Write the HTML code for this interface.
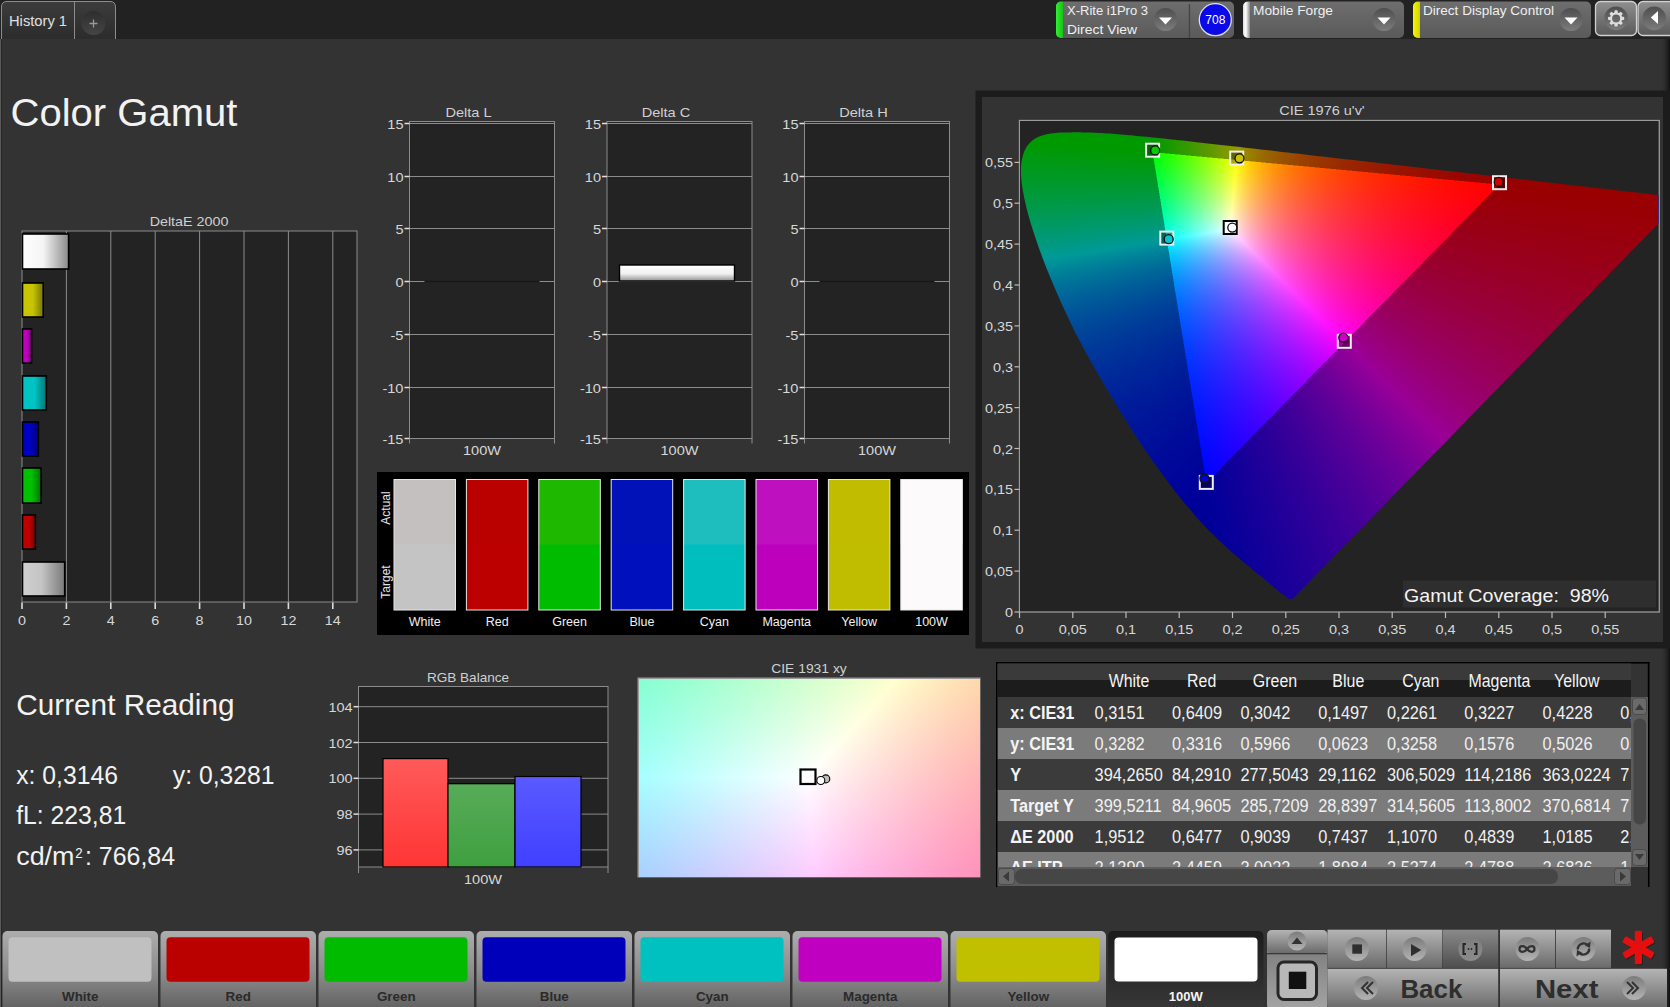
<!DOCTYPE html><html><head><meta charset="utf-8"><style>
html,body{margin:0;padding:0;width:1670px;height:1007px;overflow:hidden;background:#333;}
svg{position:absolute;left:0;top:0;font-family:"Liberation Sans", sans-serif;}
canvas{position:absolute;}
</style></head><body>
<svg width="1670" height="1007" viewBox="0 0 1670 1007">
<defs>
<linearGradient id="gTab" x1="0" y1="0" x2="0" y2="1"><stop offset="0" stop-color="#3c3c3c"/><stop offset="1" stop-color="#2c2c2c"/></linearGradient>
<linearGradient id="gPanel" x1="0" y1="0" x2="0" y2="1"><stop offset="0" stop-color="#6e6e6e"/><stop offset="1" stop-color="#5a5a5a"/></linearGradient>
<linearGradient id="gDrop" x1="0" y1="0" x2="0" y2="1"><stop offset="0" stop-color="#4e4e4e"/><stop offset="1" stop-color="#7c7c7c"/></linearGradient><linearGradient id="gSq" x1="0" y1="0" x2="0" y2="1"><stop offset="0" stop-color="#8e8e8e"/><stop offset="1" stop-color="#5a5a5a"/></linearGradient>
<linearGradient id="gBtn" x1="0" y1="0" x2="0" y2="1"><stop offset="0" stop-color="#adadad"/><stop offset="0.55" stop-color="#8a8a8a"/><stop offset="1" stop-color="#5e5e5e"/></linearGradient>
<linearGradient id="gCtl" x1="0" y1="0" x2="0" y2="1"><stop offset="0" stop-color="#b4b4b4"/><stop offset="1" stop-color="#6a6a6a"/></linearGradient>
<linearGradient id="gCtlDark" x1="0" y1="0" x2="0" y2="1"><stop offset="0" stop-color="#8a8a8a"/><stop offset="1" stop-color="#4e4e4e"/></linearGradient>
<linearGradient id="gKnob" x1="0" y1="0" x2="0" y2="1"><stop offset="0" stop-color="#7c7c7c"/><stop offset="1" stop-color="#b4b4b4"/></linearGradient><linearGradient id="gLow" x1="0" y1="0" x2="0" y2="1"><stop offset="0" stop-color="#747474"/><stop offset="1" stop-color="#a4a4a4"/></linearGradient>
<linearGradient id="gBarW" x1="0" y1="0" x2="1" y2="0"><stop offset="0" stop-color="#fff"/><stop offset="0.45" stop-color="#f4f4f4"/><stop offset="1" stop-color="#8a8a8a"/></linearGradient>
<linearGradient id="gBarG" x1="0" y1="0" x2="1" y2="0"><stop offset="0" stop-color="#d0d0d0"/><stop offset="0.45" stop-color="#c4c4c4"/><stop offset="1" stop-color="#7a7a7a"/></linearGradient>
<linearGradient id="gDC" x1="0" y1="0" x2="0" y2="1"><stop offset="0" stop-color="#fff"/><stop offset="0.55" stop-color="#f0f0f0"/><stop offset="1" stop-color="#909090"/></linearGradient>
<linearGradient id="gRR" x1="0" y1="0" x2="0" y2="1"><stop offset="0" stop-color="#ff5a5a"/><stop offset="1" stop-color="#ff3535"/></linearGradient>
<linearGradient id="gRG" x1="0" y1="0" x2="0" y2="1"><stop offset="0" stop-color="#58ac58"/><stop offset="1" stop-color="#3f9f3f"/></linearGradient>
<linearGradient id="gRB" x1="0" y1="0" x2="0" y2="1"><stop offset="0" stop-color="#5a5aff"/><stop offset="1" stop-color="#4040ff"/></linearGradient>
<linearGradient id="gRight" x1="0" y1="0" x2="1" y2="0"><stop offset="0" stop-color="#333" stop-opacity="0"/><stop offset="1" stop-color="#111"/></linearGradient>
<linearGradient id="gWbar" x1="0" y1="0" x2="1" y2="0"><stop offset="0" stop-color="#ddd"/><stop offset="0.4" stop-color="#fff"/><stop offset="1" stop-color="#888"/></linearGradient>
</defs>
<rect x="0" y="0" width="1670" height="39" fill="#222"/>
<rect x="0" y="39" width="1670" height="892" fill="#333"/>
<rect x="0" y="925" width="1670" height="82" fill="#333"/>
<rect x="1660" y="39" width="10" height="968" fill="url(#gRight)"/>
<rect x="0" y="39" width="1" height="968" fill="#5a5a5a"/><rect x="1" y="39" width="1" height="968" fill="#262626"/>
<path d="M1.5,39 V7 Q1.5,1.5 7,1.5 H110 Q115.5,1.5 115.5,7 V39" fill="url(#gTab)" stroke="#8c8c8c" stroke-width="1"/>
<line x1="74.5" y1="2" x2="74.5" y2="39" stroke="#8c8c8c" stroke-width="1"/>
<text x="9" y="26" font-size="14" fill="#e0e0e0" text-anchor="start" font-weight="normal" textLength="58" lengthAdjust="spacingAndGlyphs" >History 1</text>
<linearGradient id="gPlus" x1="0" y1="0" x2="0" y2="1"><stop offset="0" stop-color="#2e2e2e"/><stop offset="1" stop-color="#454545"/></linearGradient>
<circle cx="93.5" cy="23" r="12" fill="url(#gPlus)"/>
<path d="M89.5,23.5 H97.5 M93.5,19.5 V27.5" stroke="#9a9a9a" stroke-width="1.3"/>
<linearGradient id="gGbar" x1="0" y1="0" x2="1" y2="0"><stop offset="0" stop-color="#30f030"/><stop offset="1" stop-color="#18c018"/></linearGradient><linearGradient id="gYbar" x1="0" y1="0" x2="1" y2="0"><stop offset="0" stop-color="#f8f800"/><stop offset="1" stop-color="#d0d000"/></linearGradient>
<clipPath id="pc1"><rect x="1056" y="1.5" width="178" height="36.5" rx="5"/></clipPath>
<rect x="1056" y="1.5" width="178" height="36.5" rx="5" fill="url(#gPanel)"/>
<rect x="1056" y="1.5" width="7" height="36.5" fill="url(#gGbar)" clip-path="url(#pc1)"/>
<rect x="1188.8" y="4" width="1.3" height="34" fill="#444"/>
<text x="1067" y="15" font-size="12.5" fill="#f0f0f0" text-anchor="start" font-weight="normal" textLength="81" lengthAdjust="spacingAndGlyphs" >X-Rite i1Pro 3</text>
<text x="1067" y="34" font-size="12.5" fill="#f0f0f0" text-anchor="start" font-weight="normal" textLength="70" lengthAdjust="spacingAndGlyphs" >Direct View</text>
<circle cx="1165.5" cy="19.5" r="11.5" fill="url(#gDrop)"/>
<path d="M1159.0,17.5 L1172.0,17.5 L1165.5,24.5 Z" fill="#fff"/>
<circle cx="1215.3" cy="19.7" r="16" fill="#0a0ae6" stroke="#dcdcff" stroke-width="1.3"/>
<text x="1215.3" y="24" font-size="12" fill="#fff" text-anchor="middle" font-weight="normal" >708</text>
<clipPath id="pc2"><rect x="1243" y="1.5" width="161" height="36.5" rx="5"/></clipPath>
<rect x="1243" y="1.5" width="161" height="36.5" rx="5" fill="url(#gPanel)"/>
<rect x="1243" y="1.5" width="7" height="36.5" fill="url(#gWbar)" clip-path="url(#pc2)"/>
<text x="1253" y="15" font-size="12.5" fill="#f0f0f0" text-anchor="start" font-weight="normal" textLength="80" lengthAdjust="spacingAndGlyphs" >Mobile Forge</text>
<circle cx="1384" cy="19.5" r="11.5" fill="url(#gDrop)"/>
<path d="M1377.5,17.5 L1390.5,17.5 L1384,24.5 Z" fill="#fff"/>
<clipPath id="pc3"><rect x="1413" y="1.5" width="178" height="36.5" rx="5"/></clipPath>
<rect x="1413" y="1.5" width="178" height="36.5" rx="5" fill="url(#gPanel)"/>
<rect x="1413" y="1.5" width="7" height="36.5" fill="url(#gYbar)" clip-path="url(#pc3)"/>
<text x="1423" y="15" font-size="12.5" fill="#f0f0f0" text-anchor="start" font-weight="normal" textLength="131" lengthAdjust="spacingAndGlyphs" >Direct Display Control</text>
<circle cx="1571" cy="19.5" r="11.5" fill="url(#gDrop)"/>
<path d="M1564.5,17.5 L1577.5,17.5 L1571,24.5 Z" fill="#fff"/>
<rect x="1595.5" y="1.5" width="41" height="34" rx="5" fill="url(#gSq)" stroke="#d0d0d0" stroke-width="1.3"/>
<circle cx="1616.1" cy="18.4" r="11.8" fill="url(#gDrop)"/>
<path d="M1614.71,10.32 L1617.49,10.32 L1617.87,12.67 L1618.87,13.08 L1620.83,11.70 L1622.80,13.67 L1621.41,15.60 L1621.82,16.60 L1624.18,17.01 L1624.18,19.79 L1621.83,20.17 L1621.42,21.17 L1622.80,23.13 L1620.83,25.10 L1618.90,23.71 L1617.90,24.12 L1617.49,26.48 L1614.71,26.48 L1614.33,24.13 L1613.33,23.72 L1611.37,25.10 L1609.40,23.13 L1610.79,21.20 L1610.38,20.20 L1608.02,19.79 L1608.02,17.01 L1610.37,16.63 L1610.78,15.63 L1609.40,13.67 L1611.37,11.70 L1613.30,13.09 L1614.30,12.68 Z M1620.1,18.4 A4,4 0 1,0 1612.1,18.4 A4,4 0 1,0 1620.1,18.4 Z" fill="#dedede" fill-rule="evenodd"/>
<rect x="1638" y="1.5" width="40" height="34" rx="5" fill="url(#gSq)" stroke="#d0d0d0" stroke-width="1.3"/>
<circle cx="1654.2" cy="18.4" r="11.8" fill="url(#gDrop)"/>
<path d="M1650.8,17.5 L1658,11 L1658,24 Z" fill="#fff"/>
<text x="10.5" y="125.7" font-size="38" fill="#f2f2f2" text-anchor="start" font-weight="normal" textLength="227" lengthAdjust="spacingAndGlyphs" >Color Gamut</text>
<rect x="22" y="231" width="335" height="371" fill="#232323" stroke="#8c8c8c" stroke-width="1"/>
<line x1="66.4" y1="231" x2="66.4" y2="602" stroke="#8c8c8c" stroke-width="1"/>
<line x1="110.8" y1="231" x2="110.8" y2="602" stroke="#8c8c8c" stroke-width="1"/>
<line x1="155.2" y1="231" x2="155.2" y2="602" stroke="#8c8c8c" stroke-width="1"/>
<line x1="199.6" y1="231" x2="199.6" y2="602" stroke="#8c8c8c" stroke-width="1"/>
<line x1="244.0" y1="231" x2="244.0" y2="602" stroke="#8c8c8c" stroke-width="1"/>
<line x1="288.4" y1="231" x2="288.4" y2="602" stroke="#8c8c8c" stroke-width="1"/>
<line x1="332.8" y1="231" x2="332.8" y2="602" stroke="#8c8c8c" stroke-width="1"/>
<line x1="22.0" y1="602.5" x2="22.0" y2="609" stroke="#dcdcdc" stroke-width="1.6"/>
<text x="22.0" y="625" font-size="13.5" fill="#d8d8d8" text-anchor="middle" font-weight="normal" textLength="8.0" lengthAdjust="spacingAndGlyphs" >0</text>
<line x1="66.4" y1="602.5" x2="66.4" y2="609" stroke="#dcdcdc" stroke-width="1.6"/>
<text x="66.4" y="625" font-size="13.5" fill="#d8d8d8" text-anchor="middle" font-weight="normal" textLength="8.0" lengthAdjust="spacingAndGlyphs" >2</text>
<line x1="110.8" y1="602.5" x2="110.8" y2="609" stroke="#dcdcdc" stroke-width="1.6"/>
<text x="110.8" y="625" font-size="13.5" fill="#d8d8d8" text-anchor="middle" font-weight="normal" textLength="8.0" lengthAdjust="spacingAndGlyphs" >4</text>
<line x1="155.2" y1="602.5" x2="155.2" y2="609" stroke="#dcdcdc" stroke-width="1.6"/>
<text x="155.2" y="625" font-size="13.5" fill="#d8d8d8" text-anchor="middle" font-weight="normal" textLength="8.0" lengthAdjust="spacingAndGlyphs" >6</text>
<line x1="199.6" y1="602.5" x2="199.6" y2="609" stroke="#dcdcdc" stroke-width="1.6"/>
<text x="199.6" y="625" font-size="13.5" fill="#d8d8d8" text-anchor="middle" font-weight="normal" textLength="8.0" lengthAdjust="spacingAndGlyphs" >8</text>
<line x1="244.0" y1="602.5" x2="244.0" y2="609" stroke="#dcdcdc" stroke-width="1.6"/>
<text x="244.0" y="625" font-size="13.5" fill="#d8d8d8" text-anchor="middle" font-weight="normal" textLength="15.9" lengthAdjust="spacingAndGlyphs" >10</text>
<line x1="288.4" y1="602.5" x2="288.4" y2="609" stroke="#dcdcdc" stroke-width="1.6"/>
<text x="288.4" y="625" font-size="13.5" fill="#d8d8d8" text-anchor="middle" font-weight="normal" textLength="15.9" lengthAdjust="spacingAndGlyphs" >12</text>
<line x1="332.8" y1="602.5" x2="332.8" y2="609" stroke="#dcdcdc" stroke-width="1.6"/>
<text x="332.8" y="625" font-size="13.5" fill="#d8d8d8" text-anchor="middle" font-weight="normal" textLength="15.9" lengthAdjust="spacingAndGlyphs" >14</text>
<text x="189" y="226" font-size="13.5" fill="#d0d0d0" text-anchor="middle" font-weight="normal" textLength="78.7" lengthAdjust="spacingAndGlyphs" >DeltaE 2000</text>
<rect x="22.5" y="234" width="46.1" height="35" fill="url(#gBarW)" stroke="#000" stroke-width="1.6"/>
<linearGradient id="gB1" x1="0" y1="0" x2="1" y2="0"><stop offset="0" stop-color="#c8c400"/><stop offset="0.5" stop-color="#c8c400"/><stop offset="1" stop-color="#787500"/></linearGradient>
<rect x="22.5" y="283" width="20.7" height="34" fill="url(#gB1)" stroke="#000" stroke-width="1.6"/>
<linearGradient id="gB2" x1="0" y1="0" x2="1" y2="0"><stop offset="0" stop-color="#c000c0"/><stop offset="0.5" stop-color="#c000c0"/><stop offset="1" stop-color="#730073"/></linearGradient>
<rect x="22.5" y="329" width="9.0" height="34" fill="url(#gB2)" stroke="#000" stroke-width="1.6"/>
<linearGradient id="gB3" x1="0" y1="0" x2="1" y2="0"><stop offset="0" stop-color="#00c4c4"/><stop offset="0.5" stop-color="#00c4c4"/><stop offset="1" stop-color="#007575"/></linearGradient>
<rect x="22.5" y="376" width="23.8" height="34" fill="url(#gB3)" stroke="#000" stroke-width="1.6"/>
<linearGradient id="gB4" x1="0" y1="0" x2="1" y2="0"><stop offset="0" stop-color="#0000c0"/><stop offset="0.5" stop-color="#0000c0"/><stop offset="1" stop-color="#000073"/></linearGradient>
<rect x="22.5" y="422" width="15.9" height="34" fill="url(#gB4)" stroke="#000" stroke-width="1.6"/>
<linearGradient id="gB5" x1="0" y1="0" x2="1" y2="0"><stop offset="0" stop-color="#00c000"/><stop offset="0.5" stop-color="#00c000"/><stop offset="1" stop-color="#007300"/></linearGradient>
<rect x="22.5" y="468" width="18.5" height="35" fill="url(#gB5)" stroke="#000" stroke-width="1.6"/>
<linearGradient id="gB6" x1="0" y1="0" x2="1" y2="0"><stop offset="0" stop-color="#c00000"/><stop offset="0.5" stop-color="#c00000"/><stop offset="1" stop-color="#730000"/></linearGradient>
<rect x="22.5" y="515" width="12.9" height="34" fill="url(#gB6)" stroke="#000" stroke-width="1.6"/>
<rect x="22.5" y="562" width="42.2" height="34" fill="url(#gBarG)" stroke="#000" stroke-width="1.6"/>
<rect x="409.5" y="121.5" width="145.0" height="317.0" fill="#232323" stroke="#8c8c8c" stroke-width="1"/>
<line x1="409.5" y1="123.5" x2="554.5" y2="123.5" stroke="#8c8c8c" stroke-width="1"/>
<line x1="404.5" y1="123.5" x2="409.5" y2="123.5" stroke="#e0e0e0" stroke-width="1.5"/>
<text x="403.5" y="128.5" font-size="13.5" fill="#d8d8d8" text-anchor="end" font-weight="normal" textLength="16.2" lengthAdjust="spacingAndGlyphs" >15</text>
<line x1="409.5" y1="176.5" x2="554.5" y2="176.5" stroke="#8c8c8c" stroke-width="1"/>
<line x1="404.5" y1="176.5" x2="409.5" y2="176.5" stroke="#e0e0e0" stroke-width="1.5"/>
<text x="403.5" y="181.5" font-size="13.5" fill="#d8d8d8" text-anchor="end" font-weight="normal" textLength="16.2" lengthAdjust="spacingAndGlyphs" >10</text>
<line x1="409.5" y1="228.5" x2="554.5" y2="228.5" stroke="#8c8c8c" stroke-width="1"/>
<line x1="404.5" y1="228.5" x2="409.5" y2="228.5" stroke="#e0e0e0" stroke-width="1.5"/>
<text x="403.5" y="233.5" font-size="13.5" fill="#d8d8d8" text-anchor="end" font-weight="normal" textLength="8.1" lengthAdjust="spacingAndGlyphs" >5</text>
<line x1="409.5" y1="281.5" x2="554.5" y2="281.5" stroke="#8c8c8c" stroke-width="1"/>
<line x1="404.5" y1="281.5" x2="409.5" y2="281.5" stroke="#e0e0e0" stroke-width="1.5"/>
<text x="403.5" y="286.5" font-size="13.5" fill="#d8d8d8" text-anchor="end" font-weight="normal" textLength="8.1" lengthAdjust="spacingAndGlyphs" >0</text>
<line x1="409.5" y1="334.5" x2="554.5" y2="334.5" stroke="#8c8c8c" stroke-width="1"/>
<line x1="404.5" y1="334.5" x2="409.5" y2="334.5" stroke="#e0e0e0" stroke-width="1.5"/>
<text x="403.5" y="339.5" font-size="13.5" fill="#d8d8d8" text-anchor="end" font-weight="normal" textLength="13.0" lengthAdjust="spacingAndGlyphs" >-5</text>
<line x1="409.5" y1="387.5" x2="554.5" y2="387.5" stroke="#8c8c8c" stroke-width="1"/>
<line x1="404.5" y1="387.5" x2="409.5" y2="387.5" stroke="#e0e0e0" stroke-width="1.5"/>
<text x="403.5" y="392.5" font-size="13.5" fill="#d8d8d8" text-anchor="end" font-weight="normal" textLength="21.1" lengthAdjust="spacingAndGlyphs" >-10</text>
<line x1="409.5" y1="438.5" x2="554.5" y2="438.5" stroke="#8c8c8c" stroke-width="1"/>
<line x1="404.5" y1="438.5" x2="409.5" y2="438.5" stroke="#e0e0e0" stroke-width="1.5"/>
<text x="403.5" y="443.5" font-size="13.5" fill="#d8d8d8" text-anchor="end" font-weight="normal" textLength="21.1" lengthAdjust="spacingAndGlyphs" >-15</text>
<line x1="409.5" y1="438.5" x2="409.5" y2="443.5" stroke="#8c8c8c"/><line x1="554.5" y1="438.5" x2="554.5" y2="443.5" stroke="#8c8c8c"/>
<text x="482.0" y="455" font-size="13.5" fill="#d8d8d8" text-anchor="middle" font-weight="normal" textLength="38" lengthAdjust="spacingAndGlyphs" >100W</text>
<text x="468.5" y="117" font-size="13.5" fill="#d0d0d0" text-anchor="middle" font-weight="normal" textLength="46.2" lengthAdjust="spacingAndGlyphs" >Delta L</text>
<line x1="424.5" y1="281.5" x2="539.5" y2="281.5" stroke="#181818" stroke-width="1.5"/>
<rect x="607.0" y="121.5" width="145.0" height="317.0" fill="#232323" stroke="#8c8c8c" stroke-width="1"/>
<line x1="607.0" y1="123.5" x2="752.0" y2="123.5" stroke="#8c8c8c" stroke-width="1"/>
<line x1="602.0" y1="123.5" x2="607.0" y2="123.5" stroke="#e0e0e0" stroke-width="1.5"/>
<text x="601.0" y="128.5" font-size="13.5" fill="#d8d8d8" text-anchor="end" font-weight="normal" textLength="16.2" lengthAdjust="spacingAndGlyphs" >15</text>
<line x1="607.0" y1="176.5" x2="752.0" y2="176.5" stroke="#8c8c8c" stroke-width="1"/>
<line x1="602.0" y1="176.5" x2="607.0" y2="176.5" stroke="#e0e0e0" stroke-width="1.5"/>
<text x="601.0" y="181.5" font-size="13.5" fill="#d8d8d8" text-anchor="end" font-weight="normal" textLength="16.2" lengthAdjust="spacingAndGlyphs" >10</text>
<line x1="607.0" y1="228.5" x2="752.0" y2="228.5" stroke="#8c8c8c" stroke-width="1"/>
<line x1="602.0" y1="228.5" x2="607.0" y2="228.5" stroke="#e0e0e0" stroke-width="1.5"/>
<text x="601.0" y="233.5" font-size="13.5" fill="#d8d8d8" text-anchor="end" font-weight="normal" textLength="8.1" lengthAdjust="spacingAndGlyphs" >5</text>
<line x1="607.0" y1="281.5" x2="752.0" y2="281.5" stroke="#8c8c8c" stroke-width="1"/>
<line x1="602.0" y1="281.5" x2="607.0" y2="281.5" stroke="#e0e0e0" stroke-width="1.5"/>
<text x="601.0" y="286.5" font-size="13.5" fill="#d8d8d8" text-anchor="end" font-weight="normal" textLength="8.1" lengthAdjust="spacingAndGlyphs" >0</text>
<line x1="607.0" y1="334.5" x2="752.0" y2="334.5" stroke="#8c8c8c" stroke-width="1"/>
<line x1="602.0" y1="334.5" x2="607.0" y2="334.5" stroke="#e0e0e0" stroke-width="1.5"/>
<text x="601.0" y="339.5" font-size="13.5" fill="#d8d8d8" text-anchor="end" font-weight="normal" textLength="13.0" lengthAdjust="spacingAndGlyphs" >-5</text>
<line x1="607.0" y1="387.5" x2="752.0" y2="387.5" stroke="#8c8c8c" stroke-width="1"/>
<line x1="602.0" y1="387.5" x2="607.0" y2="387.5" stroke="#e0e0e0" stroke-width="1.5"/>
<text x="601.0" y="392.5" font-size="13.5" fill="#d8d8d8" text-anchor="end" font-weight="normal" textLength="21.1" lengthAdjust="spacingAndGlyphs" >-10</text>
<line x1="607.0" y1="438.5" x2="752.0" y2="438.5" stroke="#8c8c8c" stroke-width="1"/>
<line x1="602.0" y1="438.5" x2="607.0" y2="438.5" stroke="#e0e0e0" stroke-width="1.5"/>
<text x="601.0" y="443.5" font-size="13.5" fill="#d8d8d8" text-anchor="end" font-weight="normal" textLength="21.1" lengthAdjust="spacingAndGlyphs" >-15</text>
<line x1="607.0" y1="438.5" x2="607.0" y2="443.5" stroke="#8c8c8c"/><line x1="752.0" y1="438.5" x2="752.0" y2="443.5" stroke="#8c8c8c"/>
<text x="679.5" y="455" font-size="13.5" fill="#d8d8d8" text-anchor="middle" font-weight="normal" textLength="38" lengthAdjust="spacingAndGlyphs" >100W</text>
<text x="666.0" y="117" font-size="13.5" fill="#d0d0d0" text-anchor="middle" font-weight="normal" textLength="48.6" lengthAdjust="spacingAndGlyphs" >Delta C</text>
<rect x="619.5" y="265" width="115" height="16" fill="url(#gDC)" stroke="#000" stroke-width="1.4"/>
<rect x="804.5" y="121.5" width="145.0" height="317.0" fill="#232323" stroke="#8c8c8c" stroke-width="1"/>
<line x1="804.5" y1="123.5" x2="949.5" y2="123.5" stroke="#8c8c8c" stroke-width="1"/>
<line x1="799.5" y1="123.5" x2="804.5" y2="123.5" stroke="#e0e0e0" stroke-width="1.5"/>
<text x="798.5" y="128.5" font-size="13.5" fill="#d8d8d8" text-anchor="end" font-weight="normal" textLength="16.2" lengthAdjust="spacingAndGlyphs" >15</text>
<line x1="804.5" y1="176.5" x2="949.5" y2="176.5" stroke="#8c8c8c" stroke-width="1"/>
<line x1="799.5" y1="176.5" x2="804.5" y2="176.5" stroke="#e0e0e0" stroke-width="1.5"/>
<text x="798.5" y="181.5" font-size="13.5" fill="#d8d8d8" text-anchor="end" font-weight="normal" textLength="16.2" lengthAdjust="spacingAndGlyphs" >10</text>
<line x1="804.5" y1="228.5" x2="949.5" y2="228.5" stroke="#8c8c8c" stroke-width="1"/>
<line x1="799.5" y1="228.5" x2="804.5" y2="228.5" stroke="#e0e0e0" stroke-width="1.5"/>
<text x="798.5" y="233.5" font-size="13.5" fill="#d8d8d8" text-anchor="end" font-weight="normal" textLength="8.1" lengthAdjust="spacingAndGlyphs" >5</text>
<line x1="804.5" y1="281.5" x2="949.5" y2="281.5" stroke="#8c8c8c" stroke-width="1"/>
<line x1="799.5" y1="281.5" x2="804.5" y2="281.5" stroke="#e0e0e0" stroke-width="1.5"/>
<text x="798.5" y="286.5" font-size="13.5" fill="#d8d8d8" text-anchor="end" font-weight="normal" textLength="8.1" lengthAdjust="spacingAndGlyphs" >0</text>
<line x1="804.5" y1="334.5" x2="949.5" y2="334.5" stroke="#8c8c8c" stroke-width="1"/>
<line x1="799.5" y1="334.5" x2="804.5" y2="334.5" stroke="#e0e0e0" stroke-width="1.5"/>
<text x="798.5" y="339.5" font-size="13.5" fill="#d8d8d8" text-anchor="end" font-weight="normal" textLength="13.0" lengthAdjust="spacingAndGlyphs" >-5</text>
<line x1="804.5" y1="387.5" x2="949.5" y2="387.5" stroke="#8c8c8c" stroke-width="1"/>
<line x1="799.5" y1="387.5" x2="804.5" y2="387.5" stroke="#e0e0e0" stroke-width="1.5"/>
<text x="798.5" y="392.5" font-size="13.5" fill="#d8d8d8" text-anchor="end" font-weight="normal" textLength="21.1" lengthAdjust="spacingAndGlyphs" >-10</text>
<line x1="804.5" y1="438.5" x2="949.5" y2="438.5" stroke="#8c8c8c" stroke-width="1"/>
<line x1="799.5" y1="438.5" x2="804.5" y2="438.5" stroke="#e0e0e0" stroke-width="1.5"/>
<text x="798.5" y="443.5" font-size="13.5" fill="#d8d8d8" text-anchor="end" font-weight="normal" textLength="21.1" lengthAdjust="spacingAndGlyphs" >-15</text>
<line x1="804.5" y1="438.5" x2="804.5" y2="443.5" stroke="#8c8c8c"/><line x1="949.5" y1="438.5" x2="949.5" y2="443.5" stroke="#8c8c8c"/>
<text x="877.0" y="455" font-size="13.5" fill="#d8d8d8" text-anchor="middle" font-weight="normal" textLength="38" lengthAdjust="spacingAndGlyphs" >100W</text>
<text x="863.5" y="117" font-size="13.5" fill="#d0d0d0" text-anchor="middle" font-weight="normal" textLength="48.6" lengthAdjust="spacingAndGlyphs" >Delta H</text>
<line x1="819.5" y1="281.5" x2="934.5" y2="281.5" stroke="#181818" stroke-width="1.5"/>
<rect x="377" y="472" width="592" height="163" fill="#000"/>
<rect x="394.0" y="479.5" width="61.5" height="130.5" fill="#c4c4c4"/>
<rect x="394.0" y="479.5" width="61.5" height="65" fill="#c5c0c0"/>
<rect x="394.0" y="479.5" width="61.5" height="130.5" fill="none" stroke="#e6e6e6" stroke-width="1"/>
<text x="424.75" y="626" font-size="12.5" fill="#f0f0f0" text-anchor="middle" font-weight="normal" >White</text>
<rect x="466.4" y="479.5" width="61.5" height="130.5" fill="#bc0000"/>
<rect x="466.4" y="479.5" width="61.5" height="65" fill="#bb0000"/>
<rect x="466.4" y="479.5" width="61.5" height="130.5" fill="none" stroke="#e6e6e6" stroke-width="1"/>
<text x="497.15" y="626" font-size="12.5" fill="#f0f0f0" text-anchor="middle" font-weight="normal" >Red</text>
<rect x="538.8" y="479.5" width="61.5" height="130.5" fill="#00bc00"/>
<rect x="538.8" y="479.5" width="61.5" height="65" fill="#1eb800"/>
<rect x="538.8" y="479.5" width="61.5" height="130.5" fill="none" stroke="#e6e6e6" stroke-width="1"/>
<text x="569.55" y="626" font-size="12.5" fill="#f0f0f0" text-anchor="middle" font-weight="normal" >Green</text>
<rect x="611.2" y="479.5" width="61.5" height="130.5" fill="#0010bc"/>
<rect x="611.2" y="479.5" width="61.5" height="65" fill="#0012b8"/>
<rect x="611.2" y="479.5" width="61.5" height="130.5" fill="none" stroke="#e6e6e6" stroke-width="1"/>
<text x="641.95" y="626" font-size="12.5" fill="#f0f0f0" text-anchor="middle" font-weight="normal" >Blue</text>
<rect x="683.6" y="479.5" width="61.5" height="130.5" fill="#00bebe"/>
<rect x="683.6" y="479.5" width="61.5" height="65" fill="#1ebebe"/>
<rect x="683.6" y="479.5" width="61.5" height="130.5" fill="none" stroke="#e6e6e6" stroke-width="1"/>
<text x="714.35" y="626" font-size="12.5" fill="#f0f0f0" text-anchor="middle" font-weight="normal" >Cyan</text>
<rect x="756.0" y="479.5" width="61.5" height="130.5" fill="#bc00bc"/>
<rect x="756.0" y="479.5" width="61.5" height="65" fill="#be10be"/>
<rect x="756.0" y="479.5" width="61.5" height="130.5" fill="none" stroke="#e6e6e6" stroke-width="1"/>
<text x="786.75" y="626" font-size="12.5" fill="#f0f0f0" text-anchor="middle" font-weight="normal" >Magenta</text>
<rect x="828.4" y="479.5" width="61.5" height="130.5" fill="#c0bc00"/>
<rect x="828.4" y="479.5" width="61.5" height="65" fill="#c2bc00"/>
<rect x="828.4" y="479.5" width="61.5" height="130.5" fill="none" stroke="#e6e6e6" stroke-width="1"/>
<text x="859.1500000000001" y="626" font-size="12.5" fill="#f0f0f0" text-anchor="middle" font-weight="normal" >Yellow</text>
<rect x="900.8" y="479.5" width="61.5" height="130.5" fill="#fdfafb"/>
<rect x="900.8" y="479.5" width="61.5" height="65" fill="#fdfafb"/>
<rect x="900.8" y="479.5" width="61.5" height="130.5" fill="none" stroke="#e6e6e6" stroke-width="1"/>
<text x="931.5500000000001" y="626" font-size="12.5" fill="#f0f0f0" text-anchor="middle" font-weight="normal" >100W</text>
<text x="0" y="0" font-size="12" fill="#e8e8e8" text-anchor="middle" font-weight="normal" transform="translate(390,508) rotate(-90)">Actual</text>
<text x="0" y="0" font-size="12" fill="#e8e8e8" text-anchor="middle" font-weight="normal" transform="translate(390,582) rotate(-90)">Target</text>
<rect x="975.5" y="90.5" width="700" height="558" fill="#1c1c1c"/>
<rect x="982" y="97" width="681" height="545" fill="#333"/>
<rect x="1019.5" y="120.5" width="639.8" height="491.5" fill="#232323" stroke="#9a9a9a" stroke-width="1.3"/>
<text x="1322" y="115" font-size="13.5" fill="#d0d0d0" text-anchor="middle" font-weight="normal" textLength="85.3" lengthAdjust="spacingAndGlyphs" >CIE 1976 u'v'</text>
<line x1="1019.5" y1="612.0" x2="1019.5" y2="618.0" stroke="#bbb" stroke-width="1.2"/>
<text x="1019.5" y="634" font-size="13.5" fill="#d8d8d8" text-anchor="middle" font-weight="normal" textLength="8.0" lengthAdjust="spacingAndGlyphs" >0</text>
<line x1="1014.5" y1="612.0" x2="1019.5" y2="612.0" stroke="#bbb" stroke-width="1.2"/>
<text x="1013" y="617.0" font-size="13.5" fill="#d8d8d8" text-anchor="end" font-weight="normal" textLength="8.0" lengthAdjust="spacingAndGlyphs" >0</text>
<line x1="1072.8" y1="612.0" x2="1072.8" y2="618.0" stroke="#bbb" stroke-width="1.2"/>
<text x="1072.75" y="634" font-size="13.5" fill="#d8d8d8" text-anchor="middle" font-weight="normal" textLength="28.1" lengthAdjust="spacingAndGlyphs" >0,05</text>
<line x1="1014.5" y1="571.1" x2="1019.5" y2="571.1" stroke="#bbb" stroke-width="1.2"/>
<text x="1013" y="576.125" font-size="13.5" fill="#d8d8d8" text-anchor="end" font-weight="normal" textLength="28.1" lengthAdjust="spacingAndGlyphs" >0,05</text>
<line x1="1126.0" y1="612.0" x2="1126.0" y2="618.0" stroke="#bbb" stroke-width="1.2"/>
<text x="1126.0" y="634" font-size="13.5" fill="#d8d8d8" text-anchor="middle" font-weight="normal" textLength="20.1" lengthAdjust="spacingAndGlyphs" >0,1</text>
<line x1="1014.5" y1="530.2" x2="1019.5" y2="530.2" stroke="#bbb" stroke-width="1.2"/>
<text x="1013" y="535.25" font-size="13.5" fill="#d8d8d8" text-anchor="end" font-weight="normal" textLength="20.1" lengthAdjust="spacingAndGlyphs" >0,1</text>
<line x1="1179.2" y1="612.0" x2="1179.2" y2="618.0" stroke="#bbb" stroke-width="1.2"/>
<text x="1179.25" y="634" font-size="13.5" fill="#d8d8d8" text-anchor="middle" font-weight="normal" textLength="28.1" lengthAdjust="spacingAndGlyphs" >0,15</text>
<line x1="1014.5" y1="489.4" x2="1019.5" y2="489.4" stroke="#bbb" stroke-width="1.2"/>
<text x="1013" y="494.375" font-size="13.5" fill="#d8d8d8" text-anchor="end" font-weight="normal" textLength="28.1" lengthAdjust="spacingAndGlyphs" >0,15</text>
<line x1="1232.5" y1="612.0" x2="1232.5" y2="618.0" stroke="#bbb" stroke-width="1.2"/>
<text x="1232.5" y="634" font-size="13.5" fill="#d8d8d8" text-anchor="middle" font-weight="normal" textLength="20.1" lengthAdjust="spacingAndGlyphs" >0,2</text>
<line x1="1014.5" y1="448.5" x2="1019.5" y2="448.5" stroke="#bbb" stroke-width="1.2"/>
<text x="1013" y="453.5" font-size="13.5" fill="#d8d8d8" text-anchor="end" font-weight="normal" textLength="20.1" lengthAdjust="spacingAndGlyphs" >0,2</text>
<line x1="1285.8" y1="612.0" x2="1285.8" y2="618.0" stroke="#bbb" stroke-width="1.2"/>
<text x="1285.75" y="634" font-size="13.5" fill="#d8d8d8" text-anchor="middle" font-weight="normal" textLength="28.1" lengthAdjust="spacingAndGlyphs" >0,25</text>
<line x1="1014.5" y1="407.6" x2="1019.5" y2="407.6" stroke="#bbb" stroke-width="1.2"/>
<text x="1013" y="412.625" font-size="13.5" fill="#d8d8d8" text-anchor="end" font-weight="normal" textLength="28.1" lengthAdjust="spacingAndGlyphs" >0,25</text>
<line x1="1339.0" y1="612.0" x2="1339.0" y2="618.0" stroke="#bbb" stroke-width="1.2"/>
<text x="1339.0" y="634" font-size="13.5" fill="#d8d8d8" text-anchor="middle" font-weight="normal" textLength="20.1" lengthAdjust="spacingAndGlyphs" >0,3</text>
<line x1="1014.5" y1="366.8" x2="1019.5" y2="366.8" stroke="#bbb" stroke-width="1.2"/>
<text x="1013" y="371.75" font-size="13.5" fill="#d8d8d8" text-anchor="end" font-weight="normal" textLength="20.1" lengthAdjust="spacingAndGlyphs" >0,3</text>
<line x1="1392.2" y1="612.0" x2="1392.2" y2="618.0" stroke="#bbb" stroke-width="1.2"/>
<text x="1392.25" y="634" font-size="13.5" fill="#d8d8d8" text-anchor="middle" font-weight="normal" textLength="28.1" lengthAdjust="spacingAndGlyphs" >0,35</text>
<line x1="1014.5" y1="325.9" x2="1019.5" y2="325.9" stroke="#bbb" stroke-width="1.2"/>
<text x="1013" y="330.875" font-size="13.5" fill="#d8d8d8" text-anchor="end" font-weight="normal" textLength="28.1" lengthAdjust="spacingAndGlyphs" >0,35</text>
<line x1="1445.5" y1="612.0" x2="1445.5" y2="618.0" stroke="#bbb" stroke-width="1.2"/>
<text x="1445.5" y="634" font-size="13.5" fill="#d8d8d8" text-anchor="middle" font-weight="normal" textLength="20.1" lengthAdjust="spacingAndGlyphs" >0,4</text>
<line x1="1014.5" y1="285.0" x2="1019.5" y2="285.0" stroke="#bbb" stroke-width="1.2"/>
<text x="1013" y="290.0" font-size="13.5" fill="#d8d8d8" text-anchor="end" font-weight="normal" textLength="20.1" lengthAdjust="spacingAndGlyphs" >0,4</text>
<line x1="1498.8" y1="612.0" x2="1498.8" y2="618.0" stroke="#bbb" stroke-width="1.2"/>
<text x="1498.75" y="634" font-size="13.5" fill="#d8d8d8" text-anchor="middle" font-weight="normal" textLength="28.1" lengthAdjust="spacingAndGlyphs" >0,45</text>
<line x1="1014.5" y1="244.1" x2="1019.5" y2="244.1" stroke="#bbb" stroke-width="1.2"/>
<text x="1013" y="249.125" font-size="13.5" fill="#d8d8d8" text-anchor="end" font-weight="normal" textLength="28.1" lengthAdjust="spacingAndGlyphs" >0,45</text>
<line x1="1552.0" y1="612.0" x2="1552.0" y2="618.0" stroke="#bbb" stroke-width="1.2"/>
<text x="1552.0" y="634" font-size="13.5" fill="#d8d8d8" text-anchor="middle" font-weight="normal" textLength="20.1" lengthAdjust="spacingAndGlyphs" >0,5</text>
<line x1="1014.5" y1="203.2" x2="1019.5" y2="203.2" stroke="#bbb" stroke-width="1.2"/>
<text x="1013" y="208.25" font-size="13.5" fill="#d8d8d8" text-anchor="end" font-weight="normal" textLength="20.1" lengthAdjust="spacingAndGlyphs" >0,5</text>
<line x1="1605.2" y1="612.0" x2="1605.2" y2="618.0" stroke="#bbb" stroke-width="1.2"/>
<text x="1605.25" y="634" font-size="13.5" fill="#d8d8d8" text-anchor="middle" font-weight="normal" textLength="28.1" lengthAdjust="spacingAndGlyphs" >0,55</text>
<line x1="1014.5" y1="162.4" x2="1019.5" y2="162.4" stroke="#bbb" stroke-width="1.2"/>
<text x="1013" y="167.37499999999994" font-size="13.5" fill="#d8d8d8" text-anchor="end" font-weight="normal" textLength="28.1" lengthAdjust="spacingAndGlyphs" >0,55</text>
<text x="16.2" y="715" font-size="29.5" fill="#f2f2f2" text-anchor="start" font-weight="normal" textLength="218.4" lengthAdjust="spacingAndGlyphs" >Current Reading</text>
<text x="16.2" y="784" font-size="26" fill="#f2f2f2" text-anchor="start" font-weight="normal" textLength="101.8" lengthAdjust="spacingAndGlyphs" >x: 0,3146</text>
<text x="172.8" y="784" font-size="26" fill="#f2f2f2" text-anchor="start" font-weight="normal" textLength="101.8" lengthAdjust="spacingAndGlyphs" >y: 0,3281</text>
<text x="16.2" y="824.3" font-size="26" fill="#f2f2f2" text-anchor="start" font-weight="normal" textLength="110" lengthAdjust="spacingAndGlyphs" >fL: 223,81</text>
<text x="16.2" y="865" font-size="26" fill="#f2f2f2" text-anchor="start" font-weight="normal" textLength="58.3" lengthAdjust="spacingAndGlyphs" >cd/m</text>
<text x="75.3" y="857.5" font-size="15" fill="#f2f2f2" text-anchor="start" font-weight="normal" textLength="7.4" lengthAdjust="spacingAndGlyphs" >2</text>
<text x="85" y="865" font-size="26" fill="#f2f2f2" text-anchor="start" font-weight="normal" textLength="90" lengthAdjust="spacingAndGlyphs" >: 766,84</text>
<rect x="358.5" y="686.5" width="249.5" height="180.5" fill="#232323" stroke="#8c8c8c" stroke-width="1"/>
<line x1="358.5" y1="706.7" x2="608" y2="706.7" stroke="#8c8c8c" stroke-width="1"/>
<line x1="353.5" y1="706.7" x2="358.5" y2="706.7" stroke="#e0e0e0" stroke-width="1.5"/>
<text x="352.5" y="711.6999999999999" font-size="13.5" fill="#d8d8d8" text-anchor="end" font-weight="normal" textLength="24.1" lengthAdjust="spacingAndGlyphs" >104</text>
<line x1="358.5" y1="742.5" x2="608" y2="742.5" stroke="#8c8c8c" stroke-width="1"/>
<line x1="353.5" y1="742.5" x2="358.5" y2="742.5" stroke="#e0e0e0" stroke-width="1.5"/>
<text x="352.5" y="747.5" font-size="13.5" fill="#d8d8d8" text-anchor="end" font-weight="normal" textLength="24.1" lengthAdjust="spacingAndGlyphs" >102</text>
<line x1="358.5" y1="778.3" x2="608" y2="778.3" stroke="#8c8c8c" stroke-width="1"/>
<line x1="353.5" y1="778.3" x2="358.5" y2="778.3" stroke="#e0e0e0" stroke-width="1.5"/>
<text x="352.5" y="783.3" font-size="13.5" fill="#d8d8d8" text-anchor="end" font-weight="normal" textLength="24.1" lengthAdjust="spacingAndGlyphs" >100</text>
<line x1="358.5" y1="814.1" x2="608" y2="814.1" stroke="#8c8c8c" stroke-width="1"/>
<line x1="353.5" y1="814.1" x2="358.5" y2="814.1" stroke="#e0e0e0" stroke-width="1.5"/>
<text x="352.5" y="819.0999999999999" font-size="13.5" fill="#d8d8d8" text-anchor="end" font-weight="normal" textLength="16.1" lengthAdjust="spacingAndGlyphs" >98</text>
<line x1="358.5" y1="849.9" x2="608" y2="849.9" stroke="#8c8c8c" stroke-width="1"/>
<line x1="353.5" y1="849.9" x2="358.5" y2="849.9" stroke="#e0e0e0" stroke-width="1.5"/>
<text x="352.5" y="854.9" font-size="13.5" fill="#d8d8d8" text-anchor="end" font-weight="normal" textLength="16.1" lengthAdjust="spacingAndGlyphs" >96</text>
<line x1="358.5" y1="867" x2="358.5" y2="873" stroke="#8c8c8c"/><line x1="608" y1="867" x2="608" y2="873" stroke="#8c8c8c"/>
<text x="468" y="682" font-size="13.5" fill="#d0d0d0" text-anchor="middle" font-weight="normal" textLength="82.2" lengthAdjust="spacingAndGlyphs" >RGB Balance</text>
<text x="483" y="884" font-size="13.5" fill="#d8d8d8" text-anchor="middle" font-weight="normal" textLength="38" lengthAdjust="spacingAndGlyphs" >100W</text>
<rect x="383" y="758.6" width="65" height="108.4" fill="url(#gRR)" stroke="#000" stroke-width="1.2"/>
<rect x="448" y="783.7" width="67" height="83.3" fill="url(#gRG)" stroke="#000" stroke-width="1.2"/>
<rect x="515" y="776.5" width="66" height="90.5" fill="url(#gRB)" stroke="#000" stroke-width="1.2"/>
<text x="809" y="673" font-size="13.5" fill="#d0d0d0" text-anchor="middle" font-weight="normal" textLength="75.5" lengthAdjust="spacingAndGlyphs" >CIE 1931 xy</text>
<rect x="637.5" y="677.5" width="343" height="200" fill="#999"/>
<rect x="996" y="662" width="653.5" height="225" fill="#333"/><rect x="996" y="662" width="653.5" height="1.6" fill="#000"/><rect x="996" y="662" width="1.5" height="225" fill="#000"/><rect x="1647.8" y="662" width="1.7" height="225" fill="#000"/>
<rect x="997.5" y="663.5" width="633.5" height="17" fill="#3a3a3a"/>
<rect x="997.5" y="680" width="633.5" height="17" fill="#1c1c1c"/>
<clipPath id="tclip"><rect x="997.5" y="697" width="633.5" height="170"/></clipPath>
<g clip-path="url(#tclip)">
<rect x="997.5" y="697" width="633.5" height="31" fill="#3b3b3b"/>
<text x="1010.2" y="719" font-size="17.5" fill="#f4f4f4" text-anchor="start" font-weight="bold" textLength="64.2" lengthAdjust="spacingAndGlyphs" >x: CIE31</text>
<text x="1094.6" y="719" font-size="17.5" fill="#f0f0f0" text-anchor="start" font-weight="normal" textLength="50.0" lengthAdjust="spacingAndGlyphs" >0,3151</text>
<text x="1172" y="719" font-size="17.5" fill="#f0f0f0" text-anchor="start" font-weight="normal" textLength="50.0" lengthAdjust="spacingAndGlyphs" >0,6409</text>
<text x="1240.4" y="719" font-size="17.5" fill="#f0f0f0" text-anchor="start" font-weight="normal" textLength="50.0" lengthAdjust="spacingAndGlyphs" >0,3042</text>
<text x="1318.2" y="719" font-size="17.5" fill="#f0f0f0" text-anchor="start" font-weight="normal" textLength="50.0" lengthAdjust="spacingAndGlyphs" >0,1497</text>
<text x="1387" y="719" font-size="17.5" fill="#f0f0f0" text-anchor="start" font-weight="normal" textLength="50.0" lengthAdjust="spacingAndGlyphs" >0,2261</text>
<text x="1464.3" y="719" font-size="17.5" fill="#f0f0f0" text-anchor="start" font-weight="normal" textLength="50.0" lengthAdjust="spacingAndGlyphs" >0,3227</text>
<text x="1542.5" y="719" font-size="17.5" fill="#f0f0f0" text-anchor="start" font-weight="normal" textLength="50.0" lengthAdjust="spacingAndGlyphs" >0,4228</text>
<text x="1620.3" y="719" font-size="17.5" fill="#f0f0f0" text-anchor="start" font-weight="normal" textLength="13.6" lengthAdjust="spacingAndGlyphs" >0,</text>
<rect x="997.5" y="728" width="633.5" height="31" fill="#7b7b7b"/>
<text x="1010.2" y="750" font-size="17.5" fill="#f4f4f4" text-anchor="start" font-weight="bold" textLength="64.2" lengthAdjust="spacingAndGlyphs" >y: CIE31</text>
<text x="1094.6" y="750" font-size="17.5" fill="#f0f0f0" text-anchor="start" font-weight="normal" textLength="50.0" lengthAdjust="spacingAndGlyphs" >0,3282</text>
<text x="1172" y="750" font-size="17.5" fill="#f0f0f0" text-anchor="start" font-weight="normal" textLength="50.0" lengthAdjust="spacingAndGlyphs" >0,3316</text>
<text x="1240.4" y="750" font-size="17.5" fill="#f0f0f0" text-anchor="start" font-weight="normal" textLength="50.0" lengthAdjust="spacingAndGlyphs" >0,5966</text>
<text x="1318.2" y="750" font-size="17.5" fill="#f0f0f0" text-anchor="start" font-weight="normal" textLength="50.0" lengthAdjust="spacingAndGlyphs" >0,0623</text>
<text x="1387" y="750" font-size="17.5" fill="#f0f0f0" text-anchor="start" font-weight="normal" textLength="50.0" lengthAdjust="spacingAndGlyphs" >0,3258</text>
<text x="1464.3" y="750" font-size="17.5" fill="#f0f0f0" text-anchor="start" font-weight="normal" textLength="50.0" lengthAdjust="spacingAndGlyphs" >0,1576</text>
<text x="1542.5" y="750" font-size="17.5" fill="#f0f0f0" text-anchor="start" font-weight="normal" textLength="50.0" lengthAdjust="spacingAndGlyphs" >0,5026</text>
<text x="1620.3" y="750" font-size="17.5" fill="#f0f0f0" text-anchor="start" font-weight="normal" textLength="13.6" lengthAdjust="spacingAndGlyphs" >0,</text>
<rect x="997.5" y="759" width="633.5" height="31" fill="#3b3b3b"/>
<text x="1010.2" y="781" font-size="17.5" fill="#f4f4f4" text-anchor="start" font-weight="bold" textLength="10.9" lengthAdjust="spacingAndGlyphs" >Y</text>
<text x="1094.6" y="781" font-size="17.5" fill="#f0f0f0" text-anchor="start" font-weight="normal" textLength="68.2" lengthAdjust="spacingAndGlyphs" >394,2650</text>
<text x="1172" y="781" font-size="17.5" fill="#f0f0f0" text-anchor="start" font-weight="normal" textLength="59.1" lengthAdjust="spacingAndGlyphs" >84,2910</text>
<text x="1240.4" y="781" font-size="17.5" fill="#f0f0f0" text-anchor="start" font-weight="normal" textLength="68.2" lengthAdjust="spacingAndGlyphs" >277,5043</text>
<text x="1318.2" y="781" font-size="17.5" fill="#f0f0f0" text-anchor="start" font-weight="normal" textLength="57.9" lengthAdjust="spacingAndGlyphs" >29,1162</text>
<text x="1387" y="781" font-size="17.5" fill="#f0f0f0" text-anchor="start" font-weight="normal" textLength="68.2" lengthAdjust="spacingAndGlyphs" >306,5029</text>
<text x="1464.3" y="781" font-size="17.5" fill="#f0f0f0" text-anchor="start" font-weight="normal" textLength="67.0" lengthAdjust="spacingAndGlyphs" >114,2186</text>
<text x="1542.5" y="781" font-size="17.5" fill="#f0f0f0" text-anchor="start" font-weight="normal" textLength="68.2" lengthAdjust="spacingAndGlyphs" >363,0224</text>
<text x="1620.3" y="781" font-size="17.5" fill="#f0f0f0" text-anchor="start" font-weight="normal" textLength="9.1" lengthAdjust="spacingAndGlyphs" >7</text>
<rect x="997.5" y="790" width="633.5" height="31" fill="#7b7b7b"/>
<text x="1010.2" y="812" font-size="17.5" fill="#f4f4f4" text-anchor="start" font-weight="bold" textLength="63.6" lengthAdjust="spacingAndGlyphs" >Target Y</text>
<text x="1094.6" y="812" font-size="17.5" fill="#f0f0f0" text-anchor="start" font-weight="normal" textLength="67.0" lengthAdjust="spacingAndGlyphs" >399,5211</text>
<text x="1172" y="812" font-size="17.5" fill="#f0f0f0" text-anchor="start" font-weight="normal" textLength="59.1" lengthAdjust="spacingAndGlyphs" >84,9605</text>
<text x="1240.4" y="812" font-size="17.5" fill="#f0f0f0" text-anchor="start" font-weight="normal" textLength="68.2" lengthAdjust="spacingAndGlyphs" >285,7209</text>
<text x="1318.2" y="812" font-size="17.5" fill="#f0f0f0" text-anchor="start" font-weight="normal" textLength="59.1" lengthAdjust="spacingAndGlyphs" >28,8397</text>
<text x="1387" y="812" font-size="17.5" fill="#f0f0f0" text-anchor="start" font-weight="normal" textLength="68.2" lengthAdjust="spacingAndGlyphs" >314,5605</text>
<text x="1464.3" y="812" font-size="17.5" fill="#f0f0f0" text-anchor="start" font-weight="normal" textLength="67.0" lengthAdjust="spacingAndGlyphs" >113,8002</text>
<text x="1542.5" y="812" font-size="17.5" fill="#f0f0f0" text-anchor="start" font-weight="normal" textLength="68.2" lengthAdjust="spacingAndGlyphs" >370,6814</text>
<text x="1620.3" y="812" font-size="17.5" fill="#f0f0f0" text-anchor="start" font-weight="normal" textLength="9.1" lengthAdjust="spacingAndGlyphs" >7</text>
<rect x="997.5" y="821" width="633.5" height="31" fill="#3b3b3b"/>
<text x="1010.2" y="843" font-size="17.5" fill="#f4f4f4" text-anchor="start" font-weight="bold" textLength="63.3" lengthAdjust="spacingAndGlyphs" >&#916;E 2000</text>
<text x="1094.6" y="843" font-size="17.5" fill="#f0f0f0" text-anchor="start" font-weight="normal" textLength="50.0" lengthAdjust="spacingAndGlyphs" >1,9512</text>
<text x="1172" y="843" font-size="17.5" fill="#f0f0f0" text-anchor="start" font-weight="normal" textLength="50.0" lengthAdjust="spacingAndGlyphs" >0,6477</text>
<text x="1240.4" y="843" font-size="17.5" fill="#f0f0f0" text-anchor="start" font-weight="normal" textLength="50.0" lengthAdjust="spacingAndGlyphs" >0,9039</text>
<text x="1318.2" y="843" font-size="17.5" fill="#f0f0f0" text-anchor="start" font-weight="normal" textLength="50.0" lengthAdjust="spacingAndGlyphs" >0,7437</text>
<text x="1387" y="843" font-size="17.5" fill="#f0f0f0" text-anchor="start" font-weight="normal" textLength="50.0" lengthAdjust="spacingAndGlyphs" >1,1070</text>
<text x="1464.3" y="843" font-size="17.5" fill="#f0f0f0" text-anchor="start" font-weight="normal" textLength="50.0" lengthAdjust="spacingAndGlyphs" >0,4839</text>
<text x="1542.5" y="843" font-size="17.5" fill="#f0f0f0" text-anchor="start" font-weight="normal" textLength="50.0" lengthAdjust="spacingAndGlyphs" >1,0185</text>
<text x="1620.3" y="843" font-size="17.5" fill="#f0f0f0" text-anchor="start" font-weight="normal" textLength="13.6" lengthAdjust="spacingAndGlyphs" >2,</text>
<rect x="997.5" y="852" width="633.5" height="31" fill="#7b7b7b"/>
<text x="1010.2" y="874" font-size="17.5" fill="#f4f4f4" text-anchor="start" font-weight="bold" textLength="52.4" lengthAdjust="spacingAndGlyphs" >&#916;E ITP</text>
<text x="1094.6" y="874" font-size="17.5" fill="#f0f0f0" text-anchor="start" font-weight="normal" textLength="50.0" lengthAdjust="spacingAndGlyphs" >2,1390</text>
<text x="1172" y="874" font-size="17.5" fill="#f0f0f0" text-anchor="start" font-weight="normal" textLength="50.0" lengthAdjust="spacingAndGlyphs" >2,4459</text>
<text x="1240.4" y="874" font-size="17.5" fill="#f0f0f0" text-anchor="start" font-weight="normal" textLength="50.0" lengthAdjust="spacingAndGlyphs" >3,0022</text>
<text x="1318.2" y="874" font-size="17.5" fill="#f0f0f0" text-anchor="start" font-weight="normal" textLength="50.0" lengthAdjust="spacingAndGlyphs" >1,8984</text>
<text x="1387" y="874" font-size="17.5" fill="#f0f0f0" text-anchor="start" font-weight="normal" textLength="50.0" lengthAdjust="spacingAndGlyphs" >2,5374</text>
<text x="1464.3" y="874" font-size="17.5" fill="#f0f0f0" text-anchor="start" font-weight="normal" textLength="50.0" lengthAdjust="spacingAndGlyphs" >2,4788</text>
<text x="1542.5" y="874" font-size="17.5" fill="#f0f0f0" text-anchor="start" font-weight="normal" textLength="50.0" lengthAdjust="spacingAndGlyphs" >2,6836</text>
<text x="1620.3" y="874" font-size="17.5" fill="#f0f0f0" text-anchor="start" font-weight="normal" textLength="9.1" lengthAdjust="spacingAndGlyphs" >1</text>
</g>
<text x="1129" y="687" font-size="17.5" fill="#f4f4f4" text-anchor="middle" font-weight="normal" textLength="40.7" lengthAdjust="spacingAndGlyphs" >White</text>
<text x="1201.7" y="687" font-size="17.5" fill="#f4f4f4" text-anchor="middle" font-weight="normal" textLength="29.2" lengthAdjust="spacingAndGlyphs" >Red</text>
<text x="1275" y="687" font-size="17.5" fill="#f4f4f4" text-anchor="middle" font-weight="normal" textLength="44.3" lengthAdjust="spacingAndGlyphs" >Green</text>
<text x="1348.3" y="687" font-size="17.5" fill="#f4f4f4" text-anchor="middle" font-weight="normal" textLength="31.9" lengthAdjust="spacingAndGlyphs" >Blue</text>
<text x="1420.8" y="687" font-size="17.5" fill="#f4f4f4" text-anchor="middle" font-weight="normal" textLength="37.2" lengthAdjust="spacingAndGlyphs" >Cyan</text>
<text x="1499.4" y="687" font-size="17.5" fill="#f4f4f4" text-anchor="middle" font-weight="normal" textLength="62.0" lengthAdjust="spacingAndGlyphs" >Magenta</text>
<text x="1576.7" y="687" font-size="17.5" fill="#f4f4f4" text-anchor="middle" font-weight="normal" textLength="45.4" lengthAdjust="spacingAndGlyphs" >Yellow</text>
<rect x="1631" y="697" width="17" height="170" fill="#5c5c5c"/>
<rect x="1632.5" y="698" width="14" height="16.5" rx="3" fill="#6a6a6a" stroke="#4a4a4a"/>
<path d="M1635,710 L1644,710 L1639.5,704 Z" fill="#3a3a3a"/>
<rect x="1633.5" y="718.5" width="12.5" height="106" rx="6" fill="#464646"/>
<rect x="1632.5" y="849.5" width="14" height="16" rx="3" fill="#6a6a6a" stroke="#4a4a4a"/>
<path d="M1635,854 L1644,854 L1639.5,860 Z" fill="#3a3a3a"/>
<rect x="997.5" y="867" width="633.5" height="19" fill="#5c5c5c"/>
<rect x="1631" y="867" width="16.8" height="20" fill="#333"/>
<rect x="998.5" y="868.5" width="16" height="16" rx="3" fill="#6a6a6a" stroke="#4a4a4a"/>
<path d="M1009,871.5 L1009,881.5 L1003,876.5 Z" fill="#3a3a3a"/>
<rect x="1015" y="869" width="543" height="15" rx="7" fill="#464646"/>
<rect x="1614.5" y="868.5" width="16" height="16" rx="3" fill="#6a6a6a" stroke="#4a4a4a"/>
<path d="M1620,871.5 L1620,881.5 L1626,876.5 Z" fill="#3a3a3a"/>
<rect x="2.5" y="931" width="155.5" height="80" rx="5" fill="url(#gBtn)"/>
<rect x="8.5" y="937.3" width="143" height="44.5" rx="4" fill="#c0c0c0"/>
<text x="80.25" y="1001" font-size="13" fill="#2a2a2a" text-anchor="middle" font-weight="bold" textLength="36.4" lengthAdjust="spacingAndGlyphs" >White</text>
<rect x="160.5" y="931" width="155.5" height="80" rx="5" fill="url(#gBtn)"/>
<rect x="166.5" y="937.3" width="143" height="44.5" rx="4" fill="#bb0000"/>
<text x="238.25" y="1001" font-size="13" fill="#2a2a2a" text-anchor="middle" font-weight="bold" textLength="25.3" lengthAdjust="spacingAndGlyphs" >Red</text>
<rect x="318.5" y="931" width="155.5" height="80" rx="5" fill="url(#gBtn)"/>
<rect x="324.5" y="937.3" width="143" height="44.5" rx="4" fill="#00bb00"/>
<text x="396.25" y="1001" font-size="13" fill="#2a2a2a" text-anchor="middle" font-weight="bold" textLength="38.7" lengthAdjust="spacingAndGlyphs" >Green</text>
<rect x="476.5" y="931" width="155.5" height="80" rx="5" fill="url(#gBtn)"/>
<rect x="482.5" y="937.3" width="143" height="44.5" rx="4" fill="#0000bb"/>
<text x="554.25" y="1001" font-size="13" fill="#2a2a2a" text-anchor="middle" font-weight="bold" textLength="29.0" lengthAdjust="spacingAndGlyphs" >Blue</text>
<rect x="634.5" y="931" width="155.5" height="80" rx="5" fill="url(#gBtn)"/>
<rect x="640.5" y="937.3" width="143" height="44.5" rx="4" fill="#00c0c0"/>
<text x="712.25" y="1001" font-size="13" fill="#2a2a2a" text-anchor="middle" font-weight="bold" textLength="32.7" lengthAdjust="spacingAndGlyphs" >Cyan</text>
<rect x="792.5" y="931" width="155.5" height="80" rx="5" fill="url(#gBtn)"/>
<rect x="798.5" y="937.3" width="143" height="44.5" rx="4" fill="#c000c0"/>
<text x="870.25" y="1001" font-size="13" fill="#2a2a2a" text-anchor="middle" font-weight="bold" textLength="54.3" lengthAdjust="spacingAndGlyphs" >Magenta</text>
<rect x="950.5" y="931" width="155.5" height="80" rx="5" fill="url(#gBtn)"/>
<rect x="956.5" y="937.3" width="143" height="44.5" rx="4" fill="#c0c000"/>
<text x="1028.25" y="1001" font-size="13" fill="#2a2a2a" text-anchor="middle" font-weight="bold" textLength="41.7" lengthAdjust="spacingAndGlyphs" >Yellow</text>
<linearGradient id="gSel" x1="0" y1="0" x2="0" y2="1"><stop offset="0" stop-color="#1c1c1c"/><stop offset="0.5" stop-color="#2a2a2a"/><stop offset="1" stop-color="#383838"/></linearGradient>
<rect x="1108" y="931" width="155.5" height="80" rx="5" fill="url(#gSel)"/>
<rect x="1114.5" y="937.5" width="143" height="44" rx="4" fill="#fff"/>
<text x="1185.75" y="1001" font-size="13" fill="#f4f4f4" text-anchor="middle" font-weight="bold" >100W</text>
<rect x="1267" y="930" width="60.5" height="80" rx="5" fill="url(#gLow)"/>
<rect x="1267" y="930" width="60.5" height="23.5" rx="5" fill="url(#gCtl)"/>
<rect x="1267" y="953" width="60.5" height="1.3" fill="#3a3a3a"/>
<circle cx="1297" cy="941" r="9.5" fill="url(#gKnob)"/>
<path d="M1291.5,944 L1302.5,944 L1297,937.5 Z" fill="#333"/>
<rect x="1278" y="962" width="38.5" height="37.5" rx="6" fill="#b8b8b8" stroke="#262626" stroke-width="3"/>
<rect x="1288.8" y="971.7" width="17.5" height="17.3" fill="#111"/>
<rect x="1327.5" y="929.7" width="58.8" height="38.2" fill="url(#gCtl)"/>
<rect x="1387" y="929.7" width="55.2" height="38.2" fill="url(#gCtl)"/>
<rect x="1442.6" y="929.7" width="55.6" height="38.2" fill="url(#gCtlDark)"/>
<rect x="1500" y="929.7" width="55.2" height="38.2" fill="url(#gCtl)"/>
<rect x="1556" y="929.7" width="55.0" height="38.2" fill="url(#gCtl)"/>
<circle cx="1356.9" cy="949" r="12" fill="url(#gKnob)" opacity="1"/>
<circle cx="1414.6" cy="949" r="12" fill="url(#gKnob)" opacity="1"/>
<circle cx="1470.4" cy="949" r="12" fill="url(#gKnob)" opacity="0.55"/>
<circle cx="1527.6" cy="949" r="12" fill="url(#gKnob)" opacity="1"/>
<circle cx="1583.5" cy="949" r="12" fill="url(#gKnob)" opacity="1"/>
<rect x="1352.3" y="944.4" width="9.7" height="9.3" fill="#2e2e2e"/>
<path d="M1411,944 L1421.3,950 L1411,956.3 Z" fill="#2e2e2e"/>
<path d="M1466,944 h-2.5 v10 h2.5 M1474,944 h2.5 v10 h-2.5" fill="none" stroke="#262626" stroke-width="2"/>
<circle cx="1468.5" cy="949" r="0.9" fill="#262626"/><circle cx="1471.5" cy="949" r="0.9" fill="#262626"/>
<path d="M1527,949 C1524,945 1519.5,945.5 1519.5,949 C1519.5,952.5 1524,953 1527,949 C1530,945 1534.5,945.5 1534.5,949 C1534.5,952.5 1530,953 1527,949 Z" fill="none" stroke="#333" stroke-width="2.2"/>
<path d="M1577.8,949.5 A5.8,5.8 0 0,1 1587.5,945" fill="none" stroke="#333" stroke-width="2.4"/>
<path d="M1589.2,948.5 A5.8,5.8 0 0,1 1579.5,953" fill="none" stroke="#333" stroke-width="2.4"/>
<path d="M1585,945.5 L1590.5,941.5 L1590,948 Z M1582,952.5 L1576.5,956.5 L1577,950 Z" fill="#333"/>
<rect x="1327.5" y="968.8" width="170.7" height="40" fill="url(#gCtl)"/>
<rect x="1500" y="968.8" width="167" height="40" fill="url(#gCtl)"/>
<circle cx="1366" cy="988" r="12" fill="url(#gKnob)"/>
<path d="M1368,982 L1362,988 L1368,994 M1373,982 L1367,988 L1373,994" fill="none" stroke="#333" stroke-width="2"/>
<text x="1431.4" y="997.8" font-size="26" fill="#2e2e2e" text-anchor="middle" font-weight="bold" textLength="62" lengthAdjust="spacingAndGlyphs" >Back</text>
<circle cx="1634" cy="988" r="12" fill="url(#gKnob)"/>
<path d="M1627,982 L1633,988 L1627,994 M1632,982 L1638,988 L1632,994" fill="none" stroke="#333" stroke-width="2"/>
<text x="1566.7" y="997.5" font-size="26" fill="#2e2e2e" text-anchor="middle" font-weight="bold" textLength="63.4" lengthAdjust="spacingAndGlyphs" >Next</text>
<g transform="translate(1639.4,948.5)" fill="#1a1a1a" opacity="0.6"><rect x="-3.6" y="-16.8" width="7.2" height="33.6" rx="1.5"/><rect x="-3.6" y="-16.8" width="7.2" height="33.6" rx="1.5" transform="rotate(60)"/><rect x="-3.6" y="-16.8" width="7.2" height="33.6" rx="1.5" transform="rotate(-60)"/></g>
<g transform="translate(1638.4,947.5)" fill="#e50f0f"><rect x="-3.6" y="-16.8" width="7.2" height="33.6" rx="1.5"/><rect x="-3.6" y="-16.8" width="7.2" height="33.6" rx="1.5" transform="rotate(60)"/><rect x="-3.6" y="-16.8" width="7.2" height="33.6" rx="1.5" transform="rotate(-60)"/></g>
<clipPath id="plotclip"><rect x="1020.5" y="121.5" width="638" height="490"/></clipPath>
<linearGradient id="fbOut" x1="0" y1="0" x2="1" y2="1"><stop offset="0" stop-color="#009a10"/><stop offset="0.3" stop-color="#009a80"/><stop offset="0.5" stop-color="#1010a0"/><stop offset="0.72" stop-color="#60109a"/><stop offset="1" stop-color="#a00020"/></linearGradient>
<g clip-path="url(#plotclip)"><path d="M1293.0,598.4 L1293.0,598.4 L1293.0,598.4 L1292.9,598.4 L1292.9,598.4 L1292.9,598.4 L1292.8,598.4 L1292.8,598.5 L1292.7,598.5 L1292.7,598.6 L1292.7,598.6 L1292.6,598.7 L1292.6,598.7 L1292.5,598.7 L1292.5,598.7 L1292.4,598.7 L1292.4,598.7 L1292.3,598.7 L1292.2,598.7 L1292.2,598.7 L1292.1,598.8 L1292.0,598.8 L1292.0,598.9 L1291.9,598.9 L1291.8,599.0 L1291.7,599.0 L1291.7,599.0 L1291.6,599.0 L1291.5,599.0 L1291.4,599.0 L1291.3,599.0 L1291.2,599.0 L1291.1,599.0 L1291.0,599.0 L1290.8,599.0 L1290.7,599.0 L1290.6,599.0 L1290.5,599.0 L1290.3,599.0 L1290.2,599.0 L1290.0,599.0 L1289.9,599.0 L1289.7,599.0 L1289.5,598.9 L1289.3,598.8 L1289.0,598.7 L1288.7,598.6 L1288.4,598.4 L1288.1,598.2 L1287.7,598.0 L1287.3,597.7 L1286.9,597.4 L1286.4,597.1 L1285.9,596.7 L1285.3,596.4 L1284.8,596.0 L1284.2,595.5 L1283.6,595.1 L1283.0,594.6 L1282.3,594.1 L1281.6,593.5 L1280.8,592.9 L1280.0,592.2 L1279.1,591.5 L1278.2,590.8 L1277.2,590.0 L1276.2,589.2 L1275.2,588.3 L1274.1,587.4 L1273.0,586.4 L1271.9,585.5 L1270.7,584.4 L1269.4,583.4 L1268.1,582.3 L1266.8,581.2 L1265.4,580.0 L1264.0,578.9 L1262.5,577.6 L1260.9,576.3 L1259.2,574.9 L1257.4,573.5 L1255.5,572.0 L1253.6,570.4 L1251.6,568.8 L1249.6,567.1 L1247.5,565.4 L1245.4,563.6 L1243.2,561.8 L1240.9,559.9 L1238.5,557.9 L1236.1,555.8 L1233.5,553.5 L1230.9,551.2 L1228.1,548.8 L1225.3,546.3 L1222.4,543.6 L1219.4,540.8 L1216.4,537.8 L1213.3,534.8 L1210.1,531.7 L1206.7,528.3 L1203.2,524.6 L1199.4,520.5 L1195.5,516.0 L1191.3,511.1 L1186.9,506.0 L1182.4,500.5 L1177.7,494.7 L1172.9,488.6 L1168.0,482.1 L1163.0,475.3 L1157.8,468.1 L1152.5,460.7 L1147.1,453.0 L1141.6,444.9 L1136.1,436.5 L1130.5,427.8 L1124.8,418.7 L1119.0,409.4 L1113.3,400.0 L1107.7,390.6 L1102.1,381.0 L1096.4,371.3 L1090.8,361.4 L1085.3,351.4 L1080.0,341.6 L1075.0,331.9 L1070.3,322.2 L1065.7,312.6 L1061.3,303.0 L1057.1,293.5 L1053.2,284.3 L1049.5,275.5 L1046.0,266.9 L1042.8,258.5 L1039.8,250.4 L1037.0,242.5 L1034.5,235.0 L1032.2,227.9 L1030.1,221.2 L1028.3,214.8 L1026.7,208.8 L1025.4,203.1 L1024.2,197.7 L1023.2,192.6 L1022.4,187.8 L1021.8,183.3 L1021.3,179.1 L1021.1,175.2 L1021.0,171.5 L1021.0,168.0 L1021.2,164.6 L1021.6,161.5 L1022.1,158.6 L1022.8,156.0 L1023.5,153.4 L1024.4,151.1 L1025.5,148.9 L1026.7,146.8 L1028.0,145.0 L1029.4,143.3 L1031.0,141.7 L1032.6,140.3 L1034.3,139.1 L1036.1,138.0 L1038.0,137.0 L1040.0,136.2 L1042.0,135.5 L1044.1,134.9 L1046.3,134.3 L1048.5,133.9 L1050.8,133.5 L1053.1,133.3 L1055.5,133.0 L1057.8,132.8 L1060.3,132.6 L1062.7,132.5 L1065.2,132.4 L1067.8,132.4 L1070.3,132.4 L1072.8,132.3 L1075.3,132.3 L1077.8,132.3 L1080.4,132.3 L1082.9,132.4 L1085.4,132.4 L1088.0,132.5 L1090.6,132.6 L1093.2,132.7 L1095.8,132.8 L1098.5,133.0 L1101.2,133.1 L1103.9,133.3 L1106.6,133.4 L1109.4,133.6 L1112.2,133.8 L1115.1,134.0 L1118.0,134.3 L1121.0,134.5 L1123.9,134.7 L1127.0,135.0 L1130.0,135.3 L1133.1,135.6 L1136.3,135.9 L1139.5,136.2 L1142.8,136.5 L1146.1,136.8 L1149.5,137.1 L1152.9,137.5 L1156.4,137.8 L1159.9,138.2 L1163.5,138.6 L1167.2,139.0 L1171.0,139.4 L1174.8,139.8 L1178.6,140.2 L1182.6,140.6 L1186.6,141.1 L1190.6,141.5 L1194.7,142.0 L1198.9,142.5 L1203.2,142.9 L1207.6,143.4 L1212.0,143.9 L1216.5,144.4 L1221.1,144.9 L1225.7,145.5 L1230.5,146.0 L1235.3,146.5 L1240.1,147.1 L1245.1,147.7 L1250.1,148.2 L1255.2,148.8 L1260.4,149.4 L1265.7,150.0 L1271.0,150.6 L1276.5,151.3 L1282.0,151.9 L1287.5,152.5 L1293.2,153.2 L1298.9,153.8 L1304.7,154.5 L1310.6,155.2 L1316.5,155.9 L1322.5,156.6 L1328.6,157.3 L1334.7,158.0 L1340.9,158.7 L1347.1,159.4 L1353.4,160.1 L1359.8,160.8 L1366.2,161.5 L1372.6,162.3 L1379.0,163.0 L1385.5,163.8 L1392.0,164.5 L1398.6,165.3 L1405.1,166.0 L1411.5,166.8 L1417.9,167.5 L1424.2,168.2 L1430.5,168.9 L1436.7,169.7 L1443.0,170.4 L1449.2,171.1 L1455.4,171.8 L1461.6,172.5 L1467.8,173.2 L1474.0,173.9 L1480.0,174.6 L1485.9,175.3 L1491.7,176.0 L1497.4,176.6 L1503.0,177.2 L1508.5,177.9 L1513.9,178.5 L1519.2,179.1 L1524.3,179.7 L1529.4,180.3 L1534.4,180.8 L1539.2,181.4 L1544.0,181.9 L1548.6,182.5 L1553.0,183.0 L1557.4,183.5 L1561.6,184.0 L1565.7,184.4 L1569.7,184.9 L1573.6,185.4 L1577.3,185.8 L1581.0,186.2 L1584.5,186.6 L1587.9,187.0 L1591.3,187.4 L1594.5,187.7 L1597.7,188.1 L1600.7,188.5 L1603.7,188.8 L1606.6,189.1 L1609.4,189.5 L1612.2,189.8 L1614.9,190.1 L1617.5,190.4 L1620.1,190.7 L1622.6,191.0 L1625.1,191.3 L1627.5,191.5 L1629.8,191.8 L1632.1,192.1 L1634.3,192.3 L1636.4,192.6 L1638.4,192.8 L1640.4,193.0 L1642.3,193.2 L1644.2,193.4 L1646.0,193.6 L1647.7,193.8 L1649.3,194.0 L1650.9,194.2 L1652.4,194.4 L1653.9,194.5 L1655.2,194.7 L1656.5,194.8 L1657.8,195.0 L1659.0,195.1 L1660.2,195.3 L1661.3,195.4 L1662.4,195.5 L1663.4,195.6 L1664.4,195.8 L1665.4,195.9 L1666.3,196.0 L1667.1,196.1 L1667.9,196.2 L1668.7,196.2 L1669.4,196.3 L1670.1,196.4 L1670.7,196.5 L1671.3,196.5 L1671.8,196.6 L1672.2,196.7 L1672.7,196.7 L1673.2,196.8 L1673.6,196.8 L1674.0,196.9 L1674.4,196.9 L1674.8,196.9 L1675.2,197.0 L1675.7,197.1 L1676.3,197.1 L1677.0,197.2 L1677.7,197.3 L1678.4,197.4 L1679.1,197.4 L1679.7,197.5 L1680.3,197.6 L1680.8,197.6 L1681.3,197.7 L1681.8,197.8 L1682.2,197.8 L1682.6,197.8 L1682.8,197.9 L1683.0,197.9 L1683.2,197.9 L1683.3,197.9 L1683.3,197.9 L1683.4,197.9 Z" fill="url(#fbOut)"/>
<radialGradient id="fbY" gradientUnits="userSpaceOnUse" cx="1230.2" cy="229.1" r="150"><stop offset="0" stop-color="#fff"/><stop offset="0.7" stop-color="#ffc020"/></radialGradient>
<radialGradient id="fbC" gradientUnits="userSpaceOnUse" cx="1230.2" cy="229.1" r="330"><stop offset="0" stop-color="#fff"/><stop offset="0.7" stop-color="#20c0ff"/></radialGradient>
<radialGradient id="fbM" gradientUnits="userSpaceOnUse" cx="1230.2" cy="229.1" r="320"><stop offset="0" stop-color="#fff"/><stop offset="0.7" stop-color="#ff20e0"/></radialGradient>
<path d="M1230.2,229.1 L1499.5,184.5 L1152.6,152.2 Z" fill="url(#fbY)"/>
<path d="M1230.2,229.1 L1152.6,152.2 L1206.3,482.9 Z" fill="url(#fbC)"/>
<path d="M1230.2,229.1 L1206.3,482.9 L1499.5,184.5 Z" fill="url(#fbM)"/>
</g>
<linearGradient id="fb31" x1="0" y1="0" x2="1" y2="1"><stop offset="0" stop-color="#90ffc8"/><stop offset="0.5" stop-color="#f4f8ff"/><stop offset="1" stop-color="#ff90b8"/></linearGradient>
<rect x="639" y="679" width="341" height="198" fill="url(#fb31)"/>
</svg>
<canvas id="cv2" width="341" height="198" style="left:639px;top:679px"></canvas>
<canvas id="cv" width="638" height="490" style="left:1020px;top:121px"></canvas>
<svg width="1670" height="1007" viewBox="0 0 1670 1007" style="pointer-events:none">
<rect x="1223.7" y="221.0" width="13" height="13" fill="#fff" fill-opacity="0.9" stroke="#000" stroke-width="2"/>
<circle cx="1232.3" cy="227.6" r="4.5" fill="#fff" stroke="#111" stroke-width="1.3"/>
<rect x="1493.0" y="176.2" width="13" height="13" fill="#000" fill-opacity="0.33" stroke="#eee" stroke-width="2"/>
<circle cx="1498.7" cy="181.9" r="4.5" fill="#cc0000" stroke="#111" stroke-width="1.3"/>
<rect x="1146.1" y="143.7" width="13" height="13" fill="#000" fill-opacity="0.33" stroke="#eee" stroke-width="2"/>
<circle cx="1155.2" cy="150.4" r="4.5" fill="#04cc00" stroke="#111" stroke-width="1.3"/>
<rect x="1199.8" y="475.9" width="13" height="13" fill="#000" fill-opacity="0.33" stroke="#eee" stroke-width="2"/>
<circle cx="1204.4" cy="478.5" r="4.5" fill="#0001cc" stroke="#111" stroke-width="1.3"/>
<rect x="1160.3" y="231.6" width="13" height="13" fill="#000" fill-opacity="0.33" stroke="#eee" stroke-width="2"/>
<circle cx="1168.7" cy="239.2" r="4.5" fill="#04c7cc" stroke="#111" stroke-width="1.3"/>
<rect x="1337.8" y="334.8" width="13" height="13" fill="#000" fill-opacity="0.33" stroke="#eee" stroke-width="2"/>
<circle cx="1343.3" cy="337.7" r="4.5" fill="#cc01c8" stroke="#111" stroke-width="1.3"/>
<rect x="1230.2" y="151.6" width="13" height="13" fill="#000" fill-opacity="0.33" stroke="#eee" stroke-width="2"/>
<circle cx="1239.5" cy="158.3" r="4.5" fill="#ccc300" stroke="#111" stroke-width="1.3"/>
<rect x="800.5" y="769.5" width="15" height="14.5" fill="none" stroke="#000" stroke-width="2.2"/>
<circle cx="825.8" cy="778.9" r="4" fill="#bdbdbd" stroke="#000" stroke-width="1.1"/>
<circle cx="820.8" cy="780.5" r="4" fill="#fff" stroke="#000" stroke-width="1.1"/>
<rect x="1403" y="580.5" width="253" height="27" fill="#2e2e2e"/>
<text x="1404" y="602" font-size="18.5" fill="#f4f4f4" text-anchor="start" font-weight="normal" textLength="205" lengthAdjust="spacingAndGlyphs" >Gamut Coverage:&#160; 98%</text>
</svg>
<script>
(function(){
var GAM=1.0;var P=[273.0,477.4,273.0,477.4,273.0,477.4,272.9,477.4,272.9,477.4,272.9,477.4,272.8,477.4,272.8,477.5,272.7,477.5,272.7,477.6,272.7,477.6,272.6,477.7,272.6,477.7,272.5,477.7,272.5,477.7,272.4,477.7,272.4,477.7,272.3,477.7,272.2,477.7,272.2,477.7,272.1,477.8,272.0,477.8,272.0,477.9,271.9,477.9,271.8,478.0,271.7,478.0,271.7,478.0,271.6,478.0,271.5,478.0,271.4,478.0,271.3,478.0,271.2,478.0,271.1,478.0,271.0,478.0,270.8,478.0,270.7,478.0,270.6,478.0,270.5,478.0,270.3,478.0,270.2,478.0,270.0,478.0,269.9,478.0,269.7,478.0,269.5,477.9,269.3,477.8,269.0,477.7,268.7,477.6,268.4,477.4,268.1,477.2,267.7,477.0,267.3,476.7,266.9,476.4,266.4,476.1,265.9,475.7,265.3,475.4,264.8,475.0,264.2,474.5,263.6,474.1,263.0,473.6,262.3,473.1,261.6,472.5,260.8,471.9,260.0,471.2,259.1,470.5,258.2,469.8,257.2,469.0,256.2,468.2,255.2,467.3,254.1,466.4,253.0,465.4,251.9,464.5,250.7,463.4,249.4,462.4,248.1,461.3,246.8,460.2,245.4,459.0,244.0,457.9,242.5,456.6,240.9,455.3,239.2,453.9,237.4,452.5,235.5,451.0,233.6,449.4,231.6,447.8,229.6,446.1,227.5,444.4,225.4,442.6,223.2,440.8,220.9,438.9,218.5,436.9,216.1,434.8,213.5,432.5,210.9,430.2,208.1,427.8,205.3,425.3,202.4,422.6,199.4,419.8,196.4,416.8,193.3,413.8,190.1,410.7,186.7,407.3,183.2,403.6,179.4,399.5,175.5,395.0,171.3,390.1,166.9,385.0,162.4,379.5,157.7,373.7,152.9,367.6,148.0,361.1,143.0,354.3,137.8,347.1,132.5,339.7,127.1,332.0,121.6,323.9,116.1,315.5,110.5,306.8,104.8,297.7,99.0,288.4,93.3,279.0,87.7,269.6,82.1,260.0,76.4,250.3,70.8,240.4,65.3,230.4,60.0,220.6,55.0,210.9,50.3,201.2,45.7,191.6,41.3,182.0,37.1,172.5,33.2,163.3,29.5,154.5,26.0,145.9,22.8,137.5,19.8,129.4,17.0,121.5,14.5,114.0,12.2,106.9,10.1,100.2,8.3,93.8,6.7,87.8,5.4,82.1,4.2,76.7,3.2,71.6,2.4,66.8,1.8,62.3,1.3,58.1,1.1,54.2,1.0,50.5,1.0,47.0,1.2,43.6,1.6,40.5,2.1,37.6,2.8,35.0,3.5,32.4,4.4,30.1,5.5,27.9,6.7,25.8,8.0,24.0,9.4,22.3,11.0,20.7,12.6,19.3,14.3,18.1,16.1,17.0,18.0,16.0,20.0,15.2,22.0,14.5,24.1,13.9,26.3,13.3,28.5,12.9,30.8,12.5,33.1,12.3,35.5,12.0,37.8,11.8,40.3,11.6,42.7,11.5,45.2,11.4,47.8,11.4,50.3,11.4,52.8,11.3,55.3,11.3,57.8,11.3,60.4,11.3,62.9,11.4,65.4,11.4,68.0,11.5,70.6,11.6,73.2,11.7,75.8,11.8,78.5,12.0,81.2,12.1,83.9,12.3,86.6,12.4,89.4,12.6,92.2,12.8,95.1,13.0,98.0,13.3,101.0,13.5,103.9,13.7,107.0,14.0,110.0,14.3,113.1,14.6,116.3,14.9,119.5,15.2,122.8,15.5,126.1,15.8,129.5,16.1,132.9,16.5,136.4,16.8,139.9,17.2,143.5,17.6,147.2,18.0,151.0,18.4,154.8,18.8,158.6,19.2,162.6,19.6,166.6,20.1,170.6,20.5,174.7,21.0,178.9,21.5,183.2,21.9,187.6,22.4,192.0,22.9,196.5,23.4,201.1,23.9,205.7,24.5,210.5,25.0,215.3,25.5,220.1,26.1,225.1,26.7,230.1,27.2,235.2,27.8,240.4,28.4,245.7,29.0,251.0,29.6,256.5,30.3,262.0,30.9,267.5,31.5,273.2,32.2,278.9,32.8,284.7,33.5,290.6,34.2,296.5,34.9,302.5,35.6,308.6,36.3,314.7,37.0,320.9,37.7,327.1,38.4,333.4,39.1,339.8,39.8,346.2,40.5,352.6,41.3,359.0,42.0,365.5,42.8,372.0,43.5,378.6,44.3,385.1,45.0,391.5,45.8,397.9,46.5,404.2,47.2,410.5,47.9,416.7,48.7,423.0,49.4,429.2,50.1,435.4,50.8,441.6,51.5,447.8,52.2,454.0,52.9,460.0,53.6,465.9,54.3,471.7,55.0,477.4,55.6,483.0,56.2,488.5,56.9,493.9,57.5,499.2,58.1,504.3,58.7,509.4,59.3,514.4,59.8,519.2,60.4,524.0,60.9,528.6,61.5,533.0,62.0,537.4,62.5,541.6,63.0,545.7,63.4,549.7,63.9,553.6,64.4,557.3,64.8,561.0,65.2,564.5,65.6,567.9,66.0,571.3,66.4,574.5,66.7,577.7,67.1,580.7,67.5,583.7,67.8,586.6,68.1,589.4,68.5,592.2,68.8,594.9,69.1,597.5,69.4,600.1,69.7,602.6,70.0,605.1,70.3,607.5,70.5,609.8,70.8,612.1,71.1,614.3,71.3,616.4,71.6,618.4,71.8,620.4,72.0,622.3,72.2,624.2,72.4,626.0,72.6,627.7,72.8,629.3,73.0,630.9,73.2,632.4,73.4,633.9,73.5,635.2,73.7,636.5,73.8,637.8,74.0,639.0,74.1,640.2,74.3,641.3,74.4,642.4,74.5,643.4,74.6,644.4,74.8,645.4,74.9,646.3,75.0,647.1,75.1,647.9,75.2,648.7,75.2,649.4,75.3,650.1,75.4,650.7,75.5,651.3,75.5,651.8,75.6,652.2,75.7,652.7,75.7,653.2,75.8,653.6,75.8,654.0,75.9,654.4,75.9,654.8,75.9,655.2,76.0,655.7,76.1,656.3,76.1,657.0,76.2,657.7,76.3,658.4,76.4,659.1,76.4,659.7,76.5,660.3,76.6,660.8,76.6,661.3,76.7,661.8,76.8,662.2,76.8,662.6,76.8,662.8,76.9,663.0,76.9,663.2,76.9,663.3,76.9,663.3,76.9,663.4,76.9];
var cv=document.getElementById('cv');var ctx=cv.getContext('2d');
var w=cv.width,h=cv.height;
var SS=2;var off2=document.createElement('canvas');off2.width=w*SS;off2.height=h*SS;var oc2=off2.getContext('2d');
var img=oc2.createImageData(w*SS,h*SS);var d=img.data;
var X0=1019.500000,Y1=612.000000,SU=1065.000000,SV=817.500000,OX=1020,OY=121,OUTF=0.600000;
function g(c){c=Math.max(0,Math.min(1,c));return Math.pow(c,GAM);}
for(var j=0;j<h*SS;j++){for(var i=0;i<w*SS;i++){
 var u=(OX+(i+0.5)/SS-X0)/SU, v=(Y1-(OY+(j+0.5)/SS))/SV; var k=(i+j*w*SS)*4;
 if(v<0.003)v=0.003;
 var den=6*u-16*v+12; var x=9*u/den, y=4*v/den; var Xc=x/y, Zc=(1-x-y)/y;
 var r=3.2406*Xc-1.5372-0.4986*Zc, gg=-0.9689*Xc+1.8758+0.0415*Zc, b=0.0557*Xc-0.2040+1.0570*Zc;
 var out=(r<0||gg<0||b<0);
 r=Math.max(r,0);gg=Math.max(gg,0);b=Math.max(b,0);var m=Math.max(r,gg,b)||1;r/=m;gg/=m;b/=m;
 var f=out?OUTF:1.0;
 d[k]=Math.round(255*g(r)*f);d[k+1]=Math.round(255*g(gg)*f);d[k+2]=Math.round(255*g(b)*f);d[k+3]=255;
}}
oc2.putImageData(img,0,0);
var off=document.createElement('canvas');off.width=w;off.height=h;var oc=off.getContext('2d');oc.imageSmoothingEnabled=true;oc.imageSmoothingQuality='high';oc.drawImage(off2,0,0,w,h);
ctx.fillStyle='#232323';ctx.fillRect(0,0,w,h);
ctx.beginPath();ctx.moveTo(P[0],P[1]);for(var q=2;q<P.length;q+=2)ctx.lineTo(P[q],P[q+1]);ctx.closePath();
ctx.fillStyle=ctx.createPattern(off,'no-repeat');ctx.fill();
var c2=document.getElementById('cv2');var x2=c2.getContext('2d');var w2=c2.width,h2=c2.height;var im2=x2.createImageData(w2,h2);var e=im2.data;
var SX=6500,SY=4300;
for(var j=0;j<h2;j++){for(var i=0;i<w2;i++){
 var x=0.3127+(639+i+0.5-808)/SX, y=0.329-(679+j+0.5-776.5)/SY; var Xc=x/y, Zc=(1-x-y)/y; var k=(i+j*w2)*4;
 var r=3.2406*Xc-1.5372-0.4986*Zc, gg=-0.9689*Xc+1.8758+0.0415*Zc, b=0.0557*Xc-0.2040+1.0570*Zc;
 r=Math.max(r,0);gg=Math.max(gg,0);b=Math.max(b,0);var m=Math.max(r,gg,b);r/=m;gg/=m;b/=m;
 e[k]=Math.round(255*g(r));e[k+1]=Math.round(255*g(gg));e[k+2]=Math.round(255*g(b));e[k+3]=255;
}}
x2.putImageData(im2,0,0);
})();
</script>
</body></html>
